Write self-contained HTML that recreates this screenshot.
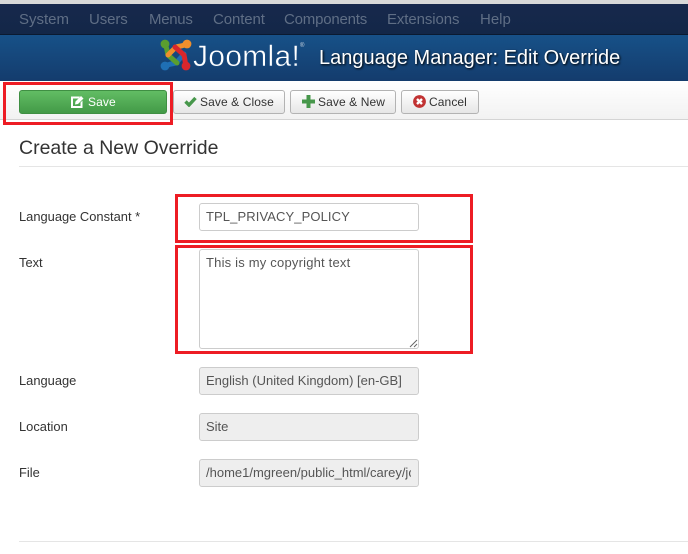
<!DOCTYPE html>
<html>
<head>
<meta charset="utf-8">
<style>
html,body{margin:0;padding:0;background:#fff}
#p{position:relative;width:688px;height:554px;overflow:hidden;background:#fff;font-family:"Liberation Sans",Arial,sans-serif;color:#333;font-size:13px}
#p div,#p svg{position:absolute}
.nav{top:11px;font-size:15px;line-height:17px;color:#5f6e85;white-space:nowrap}
.btn{top:90px;height:22px;border:1px solid #b3b3b3;border-radius:3px;background:linear-gradient(#fff,#e6e6e6);color:#333;line-height:22px;font-size:12px;letter-spacing:.1px;white-space:nowrap}
.btn span{position:absolute;top:0}
.lab{left:19px;font-size:12.9px;line-height:16px;color:#333;white-space:nowrap}
.in{left:199px;width:218px;height:26px;border:1px solid #ccc;border-radius:3px;background:#fff;color:#555;font-size:13px;line-height:26px;white-space:nowrap;overflow:hidden}
.in span{position:absolute;left:6px;top:0}
.dis{background:#eee}
.red{border:3px solid #ed1c24;box-sizing:border-box}
</style>
</head>
<body>
<div id="p">
  <div style="left:0;top:0;width:688px;height:4px;background:#d8d8d8"></div>
  <div style="left:0;top:4px;width:688px;height:31px;background:linear-gradient(#17284c,#132748);border-bottom:1px solid #0b1a30;box-sizing:border-box"></div>
  <div class="nav" style="left:19px">System</div>
  <div class="nav" style="left:89px;letter-spacing:-.1px">Users</div>
  <div class="nav" style="left:149px;letter-spacing:-.3px">Menus</div>
  <div class="nav" style="left:213px;letter-spacing:-.1px">Content</div>
  <div class="nav" style="left:284px;letter-spacing:-.2px">Components</div>
  <div class="nav" style="left:387px;letter-spacing:-.1px">Extensions</div>
  <div class="nav" style="left:480px">Help</div>

  <div style="left:0;top:35px;width:688px;height:46px;background:linear-gradient(#175188,#143c6d)"></div>
  <svg style="left:160px;top:39px" width="32" height="32" viewBox="0 0 32 32" fill="none" stroke-width="5" stroke-linecap="round" stroke-linejoin="round">
    <path d="M5 27 C9 25 12 25 16 24 L24 15" stroke="#1f6fb5"/>
    <circle cx="5" cy="27" r="4.400" fill="#1f6fb5"/>
    <path d="M5 5 C7 9 7 12 8 16 L17 24" stroke="#5a9e2f"/>
    <circle cx="5" cy="5" r="4.400" fill="#5a9e2f"/>
    <path d="M27 5 C23 7 20 7 16 8 L8 16" stroke="#ef8f2c"/>
    <circle cx="27" cy="5" r="4.400" fill="#ef8f2c"/>
    <path d="M26 27 C25 23 25 20 24 16 L15 8" stroke="#d9262c"/>
    <circle cx="26" cy="27" r="4.400" fill="#d9262c"/>
  </svg>
  <svg style="left:190px;top:36px" width="120" height="40" viewBox="0 0 120 40"><text x="3" y="30" font-family="Liberation Sans, sans-serif" font-size="30" letter-spacing="0.300" fill="#fff" stroke="#174a80" stroke-width="0.500">Joomla!</text></svg>
  <div style="left:300px;top:43px;font-size:6px;line-height:7px;color:#cfd8e3">®</div>
  <div style="left:319px;top:46px;font-size:20px;line-height:24px;color:#fff;white-space:nowrap;text-shadow:1px 1px 2px #000">Language Manager: Edit Override</div>

  <div style="left:0;top:81px;width:688px;height:39px;background:linear-gradient(#fff,#f2f2f2);border-bottom:1px solid #d4d4d4;box-sizing:border-box"></div>

  <div class="btn" style="left:19px;width:146px;background:linear-gradient(#62bd64,#439a47);border-color:#3f8f43;color:#fff">
    <svg style="left:51px;top:4px" width="13" height="13" viewBox="0 0 13 13"><path d="M0 1.500h9L7.500 3.500H2v7.500h7.500V7.500L11.500 5.500V13H0z" fill="#fff"/><path d="M4.500 6.500 10 1 12.500 3.500 7 9 4 9.500z" fill="#fff"/></svg>
    <span style="left:68px">Save</span>
  </div>
  <div class="btn" style="left:173px;width:110px">
    <svg style="left:10px;top:5px" width="13" height="11" viewBox="0 0 13 11"><path d="M1.500 5.500 5 9 11.500 2" fill="none" stroke="#47974b" stroke-width="3.400"/></svg>
    <span style="left:26px">Save &amp; Close</span>
  </div>
  <div class="btn" style="left:290px;width:104px">
    <svg style="left:11px;top:4px" width="13" height="13" viewBox="0 0 13 13"><path d="M6.500 0v13M0 6.500h13" stroke="#47974b" stroke-width="4"/></svg>
    <span style="left:27px">Save &amp; New</span>
  </div>
  <div class="btn" style="left:401px;width:76px">
    <svg style="left:11px;top:4px" width="13" height="13" viewBox="0 0 13 13"><circle cx="6.500" cy="6.500" r="6.400" fill="#c13232"/><path d="M4 4l5 5M9 4l-5 5" stroke="#fff" stroke-width="2.400"/></svg>
    <span style="left:27px">Cancel</span>
  </div>

  <div class="red" style="left:3px;top:82px;width:170px;height:43px"></div>

  <div style="left:19px;top:136px;font-size:19.5px;line-height:24px;color:#333;white-space:nowrap">Create a New Override</div>
  <div style="left:19px;top:166px;width:669px;height:1px;background:#e5e5e5"></div>

  <div class="lab" style="left:19px;top:209px">Language Constant *</div>
  <div class="in" style="top:203px"><span style="letter-spacing:.1px">TPL_PRIVACY_POLICY</span></div>

  <div class="lab" style="top:255px">Text</div>
  <div class="in" style="top:249px;height:98px"><span style="top:0;letter-spacing:.2px">This is my copyright text</span>
    <svg style="right:0;bottom:0" width="9" height="9" viewBox="0 0 9 9"><path d="M1 8 8 1M5 8 8 5" stroke="#666" stroke-width="1"/></svg>
  </div>

  <div class="lab" style="top:373px">Language</div>
  <div class="in dis" style="top:367px"><span>English (United Kingdom) [en-GB]</span></div>

  <div class="lab" style="top:419px">Location</div>
  <div class="in dis" style="top:413px"><span>Site</span></div>

  <div class="lab" style="top:465px">File</div>
  <div class="in dis" style="top:459px"><span style="width:205px;overflow:hidden;display:block">/home1/mgreen/public_html/carey/joomla</span></div>

  <div class="red" style="left:175px;top:194px;width:298px;height:49px"></div>
  <div class="red" style="left:175px;top:245px;width:298px;height:109px"></div>

  <div style="left:19px;top:541px;width:669px;height:1px;background:#e5e5e5"></div>
</div>
</body>
</html>
